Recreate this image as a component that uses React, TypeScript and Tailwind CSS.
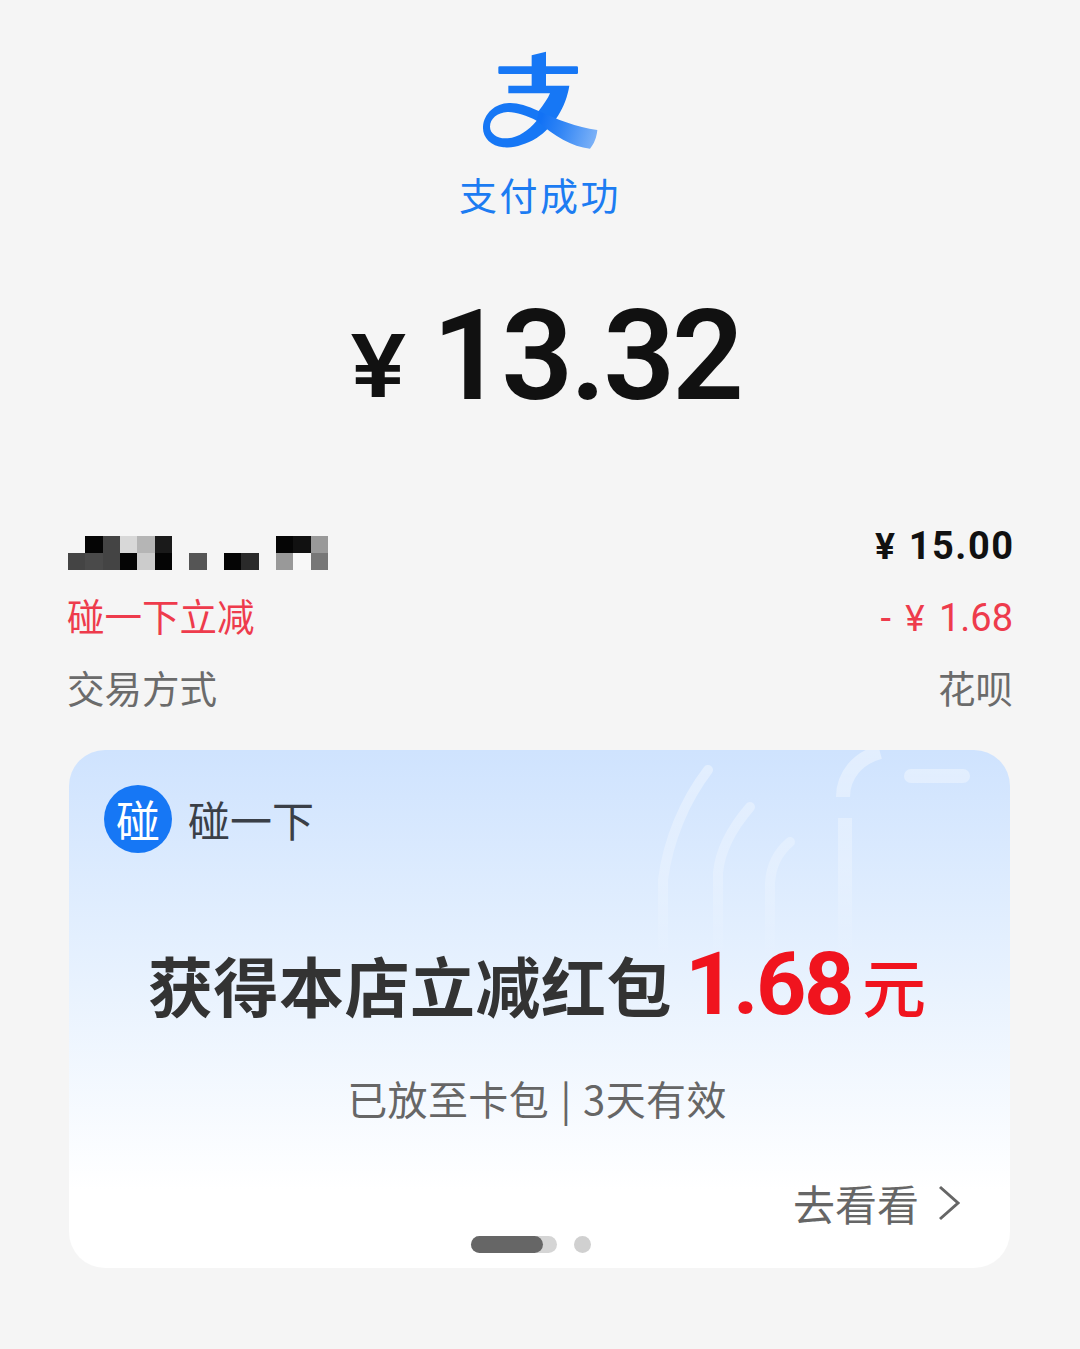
import React from "react";

const mosaicTop = [
  "", "bg-[#050505]", "bg-[#444444]", "bg-[#d8d8d8]", "bg-[#b5b5b5]", "bg-[#1a1a1a]", "", "", "", "", "", "", "bg-[#050505]", "bg-[#111111]", "bg-[#999999]",
];
const mosaicBottom = [
  "bg-[#444444]", "bg-[#4a4a4a]", "bg-[#444444]", "bg-[#050505]", "bg-[#cccccc]", "bg-[#050505]", "", "bg-[#555555]", "", "bg-[#050505]", "bg-[#2a2a2a]", "", "bg-[#999999]", "bg-[#f8f8f8]", "bg-[#777777]",
];

const Logo = () => (
  <svg width="120" height="100" viewBox="120 60 360 300" className="block">
    <defs>
      <linearGradient id="tail" x1="300" y1="280" x2="470" y2="330" gradientUnits="userSpaceOnUse">
        <stop offset="0" stopColor="#1272f5" />
        <stop offset="0.35" stopColor="#2f84f5" />
        <stop offset="1" stopColor="#7fb3f7" />
      </linearGradient>
    </defs>
    <rect x="175" y="109" width="239" height="23" rx="4" fill="#1677f5" />
    <path d="M275 76 L318 65 V175 H275 Z" fill="#1677f5" />
    <path
      d="M205 167 H388 C378 230 342 290 290 324 C254 346 218 354 190 352 C152 349 127 322 129 290 C132 250 166 220 207 219 C232 218 260 226 296 243 C312 222 324 205 330 190 H205 Z M290 272 C260 256 226 245 202 246 C172 248 150 266 150 290 C150 310 170 325 196 325 C230 325 264 304 290 272 Z"
      fill="#1677f5"
      fillRule="evenodd"
    />
    <path
      d="M296 243 C350 268 410 292 472 300 C470 322 462 342 450 356 C396 350 342 318 290 272 Z"
      fill="url(#tail)"
    />
  </svg>
);

const CardArt = () => (
  <svg
    className="absolute right-0 top-0"
    width="370"
    height="210"
    viewBox="0 0 370 210"
    fill="none"
    strokeLinecap="round"
  >
    <defs>
      <linearGradient id="fade" x1="0" y1="0" x2="0" y2="210" gradientUnits="userSpaceOnUse">
        <stop offset="0" stopColor="#ffffff" stopOpacity="0.4" />
        <stop offset="0.6" stopColor="#ffffff" stopOpacity="0.22" />
        <stop offset="1" stopColor="#ffffff" stopOpacity="0" />
      </linearGradient>
    </defs>
    <g stroke="url(#fade)" strokeWidth="10">
      <path d="M68 20 C45 50 28 90 23 130 V210" />
      <path d="M110 57 C92 78 80 100 78 123 V210" />
      <path d="M150 92 C138 102 131 116 130 133 V210" />
      <path d="M203 47 C203 25 218 8 240 2" strokeWidth="14" strokeLinecap="butt" />
      <path d="M205 68 V210" strokeWidth="14" strokeLinecap="butt" />
      <path d="M271 26 H323" strokeWidth="14" />
    </g>
  </svg>
);

export default function App() {
  return (
    <div className="h-[1349px] w-[1080px] overflow-hidden bg-[#f5f5f5] font-['Noto_Sans_CJK_SC',sans-serif]">
      <div className="flex flex-col items-center pt-[50px]">
        <Logo />
        <p className="mt-[21px] text-[38px] leading-[46px] tracking-[2.5px] text-[#1c7cf2]">支付成功</p>
        <div className="mt-[84px] flex h-[110px] items-end pl-[15px] font-['Roboto',sans-serif] font-semibold text-[#111111]">
          <span className="mr-[30px] mb-[2px] scale-x-[1.18] font-['Inter',sans-serif] text-[86px] font-semibold leading-[86px]">¥</span>
          <span className="text-[126px] leading-[110px] tracking-[-3px]">13.32</span>
        </div>
      </div>

      {/* Detail rows */}
      <div className="mt-[99px] px-[67px] text-[37.5px]">
        <div className="flex h-[72px] items-center justify-between">
          <div className="mt-[14px] ml-px grid grid-cols-[repeat(15,17.33px)] grid-rows-[17px_17px]">
            {mosaicTop.map((c, i) => (
              <div key={`t${i}`} className={c} />
            ))}
            {mosaicBottom.map((c, i) => (
              <div key={`b${i}`} className={c} />
            ))}
          </div>
          <span className="-mr-[1.5px] font-['Roboto',sans-serif] text-[38px] font-bold tracking-[1.5px] text-[#111111]">
            <span className="mr-[12px] font-['Inter',sans-serif] text-[36px]">¥</span>15.00
          </span>
        </div>
        <div className="flex h-[72px] items-center justify-between text-[#ee3b4c]">
          <span className="pb-[6px]">碰一下立减</span>
          <span className="font-['Roboto',sans-serif] text-[38px]">
            -<span className="mx-[14px] font-['Inter',sans-serif] text-[36px]">¥</span>1.68
          </span>
        </div>
        <div className="flex h-[72px] items-center justify-between text-[#6b6b6b]">
          <span className="pb-[6px]">交易方式</span>
          <span className="pb-[6px]">花呗</span>
        </div>
      </div>

      {/* Promo card */}
      <div className="relative mt-[24px] ml-[69px] h-[518px] w-[941px] overflow-hidden rounded-[36px] bg-linear-to-b from-[#cfe3fe] via-[#e8f2fe] via-45% to-white to-85%">
        <CardArt />
        <div className="relative flex flex-col">
          <div className="flex items-center pl-[35px] pt-[35px]">
            <div className="flex h-[68px] w-[68px] items-center justify-center rounded-full bg-[#1677f5] text-[44px] leading-none text-white">
              碰
            </div>
            <span className="ml-[16px] text-[42px] leading-[68px] text-[#3a3f47]">碰一下</span>
          </div>
          <div className="mt-[86px] flex h-[90px] items-center pl-[79px] font-bold text-[#333333]">
            <span className="text-[65px] leading-none tracking-[0.5px]">获得本店立减红包</span>
            <span className="ml-[13px] font-['Roboto',sans-serif] text-[88px] leading-none tracking-[-2.5px] text-[#f0141e]">1.68</span>
            <span className="ml-[10px] text-[64px] font-medium leading-none text-[#f0141e]">元</span>
          </div>
          <p className="mt-[44px] pr-[5px] text-center text-[40px] leading-[50px] tracking-[0.4px] text-[#666666]">
            已放至卡包 <span className="px-[2px]">|</span> 3天有效
          </p>
          <div className="mt-[55px] flex items-center justify-end pr-[49px] text-[42px] leading-[50px] text-[#666666]">
            <span>去看看</span>
            <svg width="24" height="38" viewBox="0 0 24 38" fill="none" stroke="#666666" strokeWidth="3" className="ml-[18px]">
              <path d="M3 3 L21 19 L3 35" />
            </svg>
          </div>
        </div>
        <div className="absolute bottom-[15px] left-[402px] flex items-center gap-[17px]">
          <div className="h-[17px] w-[86px] rounded-full bg-[#d5d5d5]">
            <div className="h-[17px] w-[72px] rounded-full bg-[#666666]" />
          </div>
          <div className="h-[17px] w-[17px] rounded-full bg-[#d0d0d0]" />
        </div>
      </div>
    </div>
  );
}
